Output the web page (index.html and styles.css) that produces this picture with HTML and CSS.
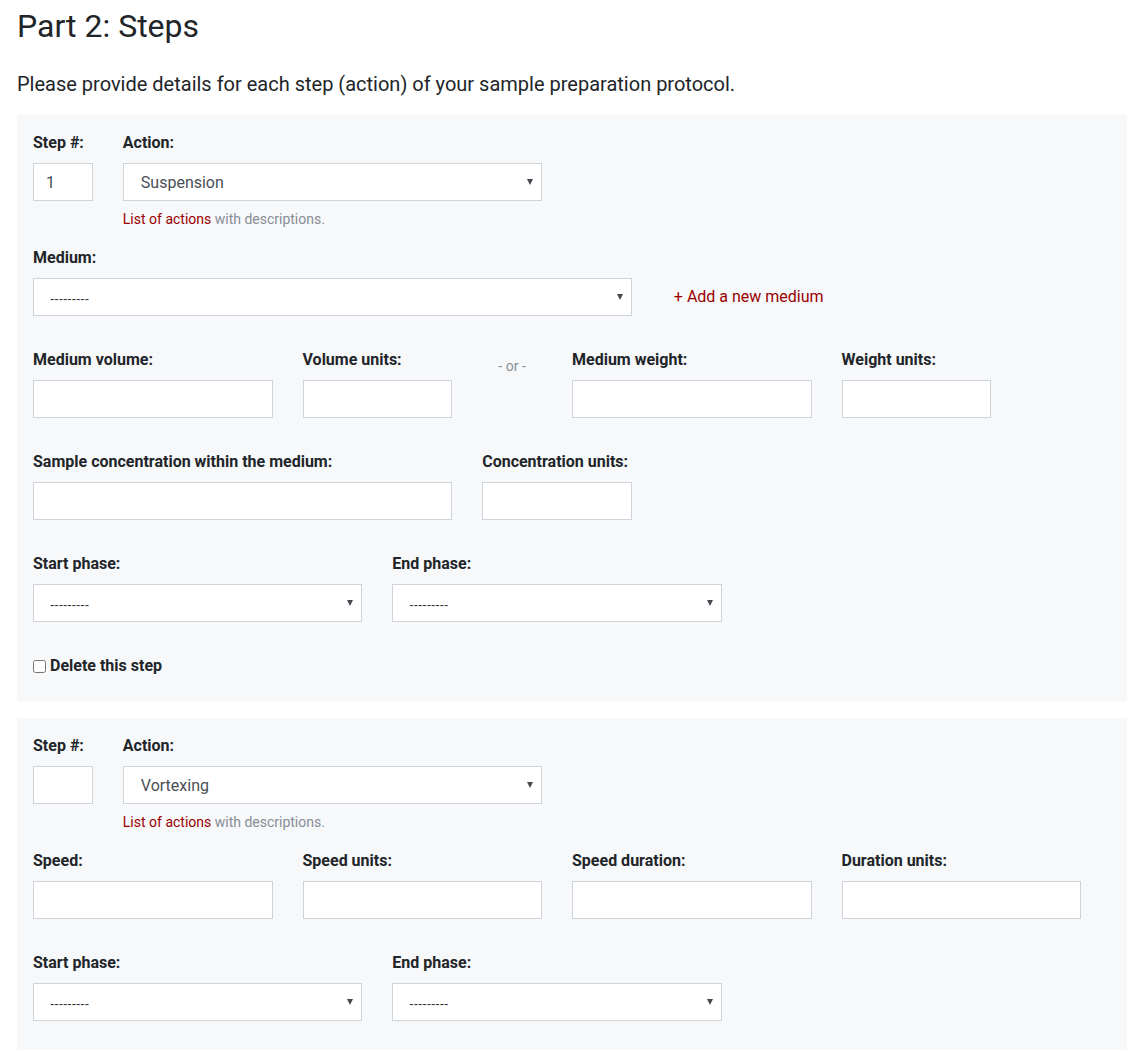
FILE: index.html
```html
<!DOCTYPE html>
<html lang="en">
<head>
<meta charset="utf-8">
<title>Part 2: Steps</title>
<link rel="stylesheet" href="styles.css">
</head>
<body>
<h1 class="title">Part 2: Steps</h1>
<p class="intro">Please provide details for each step (action) of your sample preparation protocol.</p>

<section class="panel">
  <div class="grid row help-row">
    <div class="field span-1">
      <label class="lbl">Step #:</label>
      <input class="ctl" type="text" value="1">
    </div>
    <div class="field span-5">
      <label class="lbl">Action:</label>
      <div class="sel"><select class="ctl"><option>Suspension</option></select></div>
      <div class="help"><a class="link" href="#">List of actions</a> with descriptions.</div>
    </div>
  </div>

  <div class="grid row">
    <label class="lbl medium-lbl">Medium:</label>
    <div class="sel medium-sel"><select class="ctl blank"><option>---------</option></select></div>
    <a class="link add-link" href="#">+ Add a new medium</a>
  </div>

  <div class="grid row">
    <div class="field span-3">
      <label class="lbl">Medium volume:</label>
      <input class="ctl" type="text">
    </div>
    <div class="field span-2">
      <label class="lbl">Volume units:</label>
      <input class="ctl" type="text">
    </div>
    <div class="or span-1">- or -</div>
    <div class="field span-3">
      <label class="lbl">Medium weight:</label>
      <input class="ctl" type="text">
    </div>
    <div class="field span-2">
      <label class="lbl">Weight units:</label>
      <input class="ctl" type="text">
    </div>
  </div>

  <div class="grid row">
    <div class="field span-5">
      <label class="lbl">Sample concentration within the medium:</label>
      <input class="ctl" type="text">
    </div>
    <div class="field span-2">
      <label class="lbl">Concentration units:</label>
      <input class="ctl" type="text">
    </div>
  </div>

  <div class="grid row">
    <div class="field span-4">
      <label class="lbl">Start phase:</label>
      <div class="sel"><select class="ctl blank"><option>---------</option></select></div>
    </div>
    <div class="field span-4">
      <label class="lbl">End phase:</label>
      <div class="sel"><select class="ctl blank"><option>---------</option></select></div>
    </div>
  </div>

  <label class="delete"><input type="checkbox" class="chk"> Delete this step</label>
</section>

<section class="panel">
  <div class="grid row help-row">
    <div class="field span-1">
      <label class="lbl">Step #:</label>
      <input class="ctl" type="text">
    </div>
    <div class="field span-5">
      <label class="lbl">Action:</label>
      <div class="sel"><select class="ctl"><option>Vortexing</option></select></div>
      <div class="help"><a class="link" href="#">List of actions</a> with descriptions.</div>
    </div>
  </div>

  <div class="grid row">
    <div class="field span-3">
      <label class="lbl">Speed:</label>
      <input class="ctl" type="text">
    </div>
    <div class="field span-3">
      <label class="lbl">Speed units:</label>
      <input class="ctl" type="text">
    </div>
    <div class="field span-3">
      <label class="lbl">Speed duration:</label>
      <input class="ctl" type="text">
    </div>
    <div class="field span-3">
      <label class="lbl">Duration units:</label>
      <input class="ctl" type="text">
    </div>
  </div>

  <div class="grid row">
    <div class="field span-4">
      <label class="lbl">Start phase:</label>
      <div class="sel"><select class="ctl blank"><option>---------</option></select></div>
    </div>
    <div class="field span-4">
      <label class="lbl">End phase:</label>
      <div class="sel"><select class="ctl blank"><option>---------</option></select></div>
    </div>
  </div>

  <label class="delete"><input type="checkbox" class="chk"> Delete this step</label>
</section>
</body>
</html>
```

FILE: styles.css
```css
* { box-sizing: border-box; }

body {
  margin: 0;
  padding: 7px 9px 20px 17px;
  font-family: Roboto, "Liberation Sans", Arial, sans-serif;
  color: #212529;
  background: #ffffff;
}

.title {
  margin: 0 0 25px 0;
  font-size: 32px;
  font-weight: 400;
  line-height: 38px;
}

.intro {
  margin: 0 0 17px 0;
  font-size: 20px;
  line-height: 28px;
}

.panel {
  width: 1110px;
  background: #f7f8fa;
  padding: 15px 46px 23px 16px;
  margin-bottom: 17px;
}

.grid {
  display: grid;
  grid-template-columns: repeat(12, 1fr);
  column-gap: 30px;
}

.row { margin-bottom: 31px; }
.help-row { margin-bottom: 15px; }

.span-1 { grid-column: span 1; }
.span-2 { grid-column: span 2; }
.span-3 { grid-column: span 3; }
.span-4 { grid-column: span 4; }
.span-5 { grid-column: span 5; }

.field { display: flex; flex-direction: column; min-width: 0; }

.lbl {
  display: block;
  font-size: 16px;
  font-weight: 700;
  line-height: 24px;
  padding-top: 1px;
  margin-bottom: 8px;
  color: #212529;
}

.ctl {
  display: block;
  width: 100%;
  height: 38px;
  border: 1px solid #ced4da;
  border-radius: 0;
  background: #ffffff;
  font-family: Roboto, "Liberation Sans", Arial, sans-serif;
  font-size: 16px;
  color: #495057;
  padding: 0 12px;
  outline: none;
}

select.ctl {
  -webkit-appearance: none;
  appearance: none;
  padding: 0 26px 0 17px;
}

select.blank {
  font-family: Arial, "Liberation Sans", sans-serif;
  font-size: 13px;
  color: #333333;
  padding-left: 16px;
  padding-top: 2px;
}

.sel { position: relative; }
.sel::after {
  content: "";
  position: absolute;
  right: 9px;
  top: 16px;
  border-left: 3px solid transparent;
  border-right: 3px solid transparent;
  border-top: 6px solid #444a50;
  pointer-events: none;
}

.help {
  margin-top: 8px;
  font-size: 14px;
  line-height: 21px;
  color: #868e96;
}

.link {
  color: #990000;
  text-decoration: none;
}

.medium-lbl { grid-column: 1 / 8; grid-row: 1; }
.medium-sel { grid-column: 1 / 8; grid-row: 2; }
.add-link {
  grid-column: 8 / 13;
  grid-row: 2;
  align-self: center;
  padding-left: 12px;
  font-size: 16px;
  line-height: 24px;
}

.or {
  padding-top: 9px;
  text-align: center;
  font-size: 14px;
  line-height: 20px;
  color: #868e96;
}

.delete {
  display: flex;
  align-items: center;
  padding-top: 1px;
  font-size: 16px;
  font-weight: 700;
  line-height: 24px;
  color: #212529;
}

.chk {
  width: 13px;
  height: 13px;
  margin: 0 4px 0 0;
}
```
